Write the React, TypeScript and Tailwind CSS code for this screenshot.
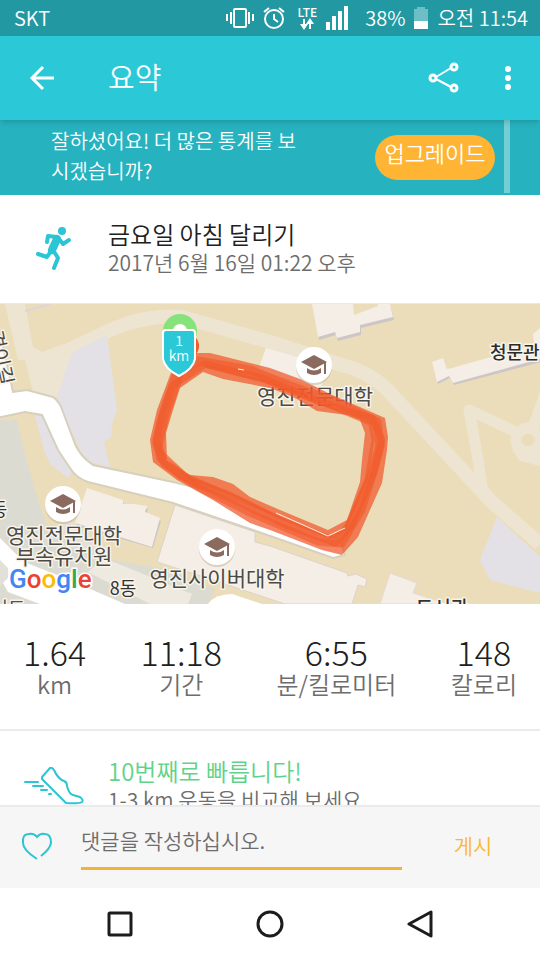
import type { ReactNode } from "react";

type PinProps = { x: number; y: number };

function SchoolPin({ x, y }: PinProps) {
  return (
    <g transform={`translate(${x} ${y})`}>
      <circle cx="0" cy="2" r="18" fill="#b9ab8c" opacity="0.45" />
      <circle r="18" fill="#ffffff" />
      <path d="M0 -10 L13 -3 L0 4 L-13 -3 Z" fill="#8b6a60" />
      <path d="M-7 3 Q0 8 7 3 V8 Q0 12 -7 8 Z" fill="#8b6a60" />
      <path d="M11 -3 V9" stroke="#8b6a60" strokeWidth="2" />
    </g>
  );
}

type LabelProps = {
  x: number;
  y: number;
  size?: number;
  color?: string;
  anchor?: "start" | "middle";
  weight?: number;
  rotate?: number;
  children: ReactNode;
};

function MapLabel({ x, y, size = 21, color = "#4b4a48", anchor = "middle", weight = 400, rotate = 0, children }: LabelProps) {
  return (
    <text
      x={x}
      y={y}
      fontSize={size}
      fontWeight={weight}
      fill={color}
      textAnchor={anchor}
      stroke="#f8f4ea"
      strokeWidth="3"
      strokeLinejoin="round"
      paintOrder="stroke"
      transform={rotate ? `rotate(${rotate} ${x} ${y})` : undefined}
    >
      {children}
    </text>
  );
}

function RouteMap() {
  return (
    <svg
      className="block h-[300px] w-full bg-[#ebddb9]"
      viewBox="0 0 540 300"
      preserveAspectRatio="xMidYMid slice"
      role="img"
      aria-label="달리기 경로 지도"
    >
      <rect width="540" height="300" fill="#ebddb9" />

      {/* footpaths */}
      <path d="M5 0 H25 L33 43 L47 50 L68 44 L105 25 L107 31 L73 48 L57 93 L33 88 L25 56 L18 56 Z" fill="#ede5d2" />
      <g fill="none" stroke="#ede5d2" strokeLinejoin="round">
        <path d="M40 56 L68 46 L115 24 Q150 10 182 13 L270 38 L345 62 Q375 70 395 94 L450 153 L493 199 L540 240" strokeWidth="14" />
        <path d="M483 188 L478 156 L469 106 L514 127" strokeWidth="11" />
        <path d="M532 126 L545 90" strokeWidth="11" />
      </g>
      <circle cx="528" cy="136" r="12" fill="none" stroke="#ede5d2" strokeWidth="11" />
      <path d="M512 146 L520 157 L540 162 V140 Z" fill="#ede5d2" />

      {/* open ground */}
      <path d="M107 31 L73 48 L67 63 L57 93 L62 108 L85 156 L110 164 L104 138 L111 133 L112 120 L117 106 Z" fill="#e4e1e6" />
      <path d="M35 112 H42 L50 129 L58 146 L72 167 L68 174 L50 160 L44 146 Z" fill="#e4e1e6" />
      <path d="M497 213 L540 253 V289 L490 276 L480 256 Z" fill="#e4e1e6" />
      <path d="M25 7 L50 0" stroke="#dcd5dc" strokeWidth="2" />
      <path d="M0 116 H17 L25 150 L35 186 L47 223 L113 256 L170 266 L215 285 L208 300 H0 Z" fill="#dcdbd2" />
      <path d="M75 219 L60 215 L66 240 L110 250 Z" fill="#e5dfd8" />

      {/* buildings */}
      <g fill="#cdc6c6" transform="translate(1 3)">
        <path d="M87 184 L123 196 L123 200 L134 200 L147 202 L145 208 L160 214 L152 241 L75 219 Z" />
        <path d="M312 0 L318 33 L335 28 L337 34 L360 28 V21 L393 13 L390 0 Z" />
        <path d="M432 58 L443 54 L447 65 L452 64 L540 39 V55 L453 78 L449 71 L437 77 Z" />
      </g>
      <g fill="#f4eee6">
        <path d="M87 184 L123 196 L123 200 L134 200 L147 202 L145 208 L160 214 L152 243 L75 219 Z" />
        <path d="M175 201 L255 228 V238 L270 242 L347 269 L348 272 L356 270 L367 275 L365 283 L358 281 L352 300 H285 L207 274 L157 258 Z" stroke="#ddd3c9" />
        <path d="M390 269 L417 279 L413 289 L448 300 H380 Z" stroke="#e4dad0" />
        <path d="M312 0 L318 33 L335 28 L337 34 L360 28 V21 L393 13 L390 0 Z" />
        <path d="M432 58 L443 54 L447 65 L452 64 L540 39 V55 L453 79 L449 72 L437 78 Z" />
        <path d="M533 30 L540 24 V40 L534 38 Z" />
        <path d="M258 66 L266 44 L300 54 L328 68 L320 84 Z" />
        <path d="M88 268 L104 254 L192 290 L188 300 H150 Z" fill="#efeae0" />
      </g>
      <path d="M353 0 L354 11 L378 2 V0 Z" fill="#ebddb9" />

      {/* streets */}
      <path
        d="M-4 12 L13 88 L27 86 L53 93 Q60 98 63 108 L75 140 Q80 152 93 161 L173 178 L215 188 L340 236 L345 251 L333 254 L253 226 L173 199 L88 178 Q76 174 70 164 L58 146 L42 111 L25 108 L-4 114 Z"
        fill="#ffffff"
        stroke="#d6d0bd"
        strokeWidth="2"
      />
      <path d="M-2 232 L24 258 L60 272 L125 300 H40 L8 288 L-2 270 Z" fill="#ffffff" />
      <path d="M208 300 Q215 290 232 290 L262 300 Z" fill="#ffffff" />
      <path d="M-2 254 L8 264 L8 274 L-2 284 Z" fill="#e2e0d8" />

      <MapLabel x={315} y={100}>영진전문대학</MapLabel>

      {/* recorded laps */}
      <circle cx="187" cy="42" r="12" fill="#f15a29" />
      <path
        fillRule="evenodd"
        fill="#f0562a"
        fillOpacity="0.72"
        d="M172 66 L157 106 L150 136 L153 158 L177 176 L213 196 L250 219 L270 226 L322 246 L342 251 L358 233 L382 179 L387 146 L388 133 L385 114 L330 90 L300 75 L270 64 L210 49 L192 49 Z
           M180 84 L203 68 L223 75 L270 84 L293 93 L317 107 L347 111 L360 116 L365 129 L362 156 L360 178 L347 216 L328 226 L280 206 L250 193 L233 180 L213 173 L190 171 L167 156 L166 129 L173 106 Z"
      />
      <g fill="none" stroke="#f25a2b" strokeLinejoin="round" strokeOpacity="0.6">
        <path d="M177 70 L164 108 L157 136 L161 154 L182 172 L240 198 L286 220 L335 238 L350 222 L372 170 L380 142 L377 118 L336 98 L290 82 L250 66 L198 57 Z" strokeWidth="9" />
        <path d="M172 82 L160 118 L156 140 L164 160 L200 184 L250 209 L318 238 L342 240 L362 206 L375 165 L382 136 L372 114 L320 98 L262 74 L205 60 Z" strokeWidth="7" />
        <path d="M182 72 L168 112 L160 146 L190 174 L232 190 L280 214 L330 233 L344 226 L366 176 L373 136 L370 120 L330 103 L270 79 L205 62" strokeWidth="3" />
      </g>
      <path d="M276 209 L328 232 L345 224 M238 65 L244 66" fill="none" stroke="#fff4ea" strokeWidth="1" />

      <SchoolPin x={314} y={61} />
      <SchoolPin x={63} y={200} />
      <SchoolPin x={217} y={243} />

      <MapLabel x={490} y={55} size={18} color="#2b2b2b" anchor="start" weight={500}>청문관</MapLabel>
      <MapLabel x={64} y={239}>영진전문대학</MapLabel>
      <MapLabel x={64} y={260}>부속유치원</MapLabel>
      <MapLabel x={217} y={282}>영진사이버대학</MapLabel>
      <MapLabel x={123} y={291} size={18} color="#333333">8동</MapLabel>
      <MapLabel x={-1} y={212} size={18} color="#333333">동</MapLabel>
      <MapLabel x={442} y={311} size={19} color="#333333" weight={500}>도서관</MapLabel>
      <MapLabel x={8} y={312} size={19} color="#55524e">서도</MapLabel>
      <MapLabel x={-12} y={28} size={20} anchor="start" rotate={78}>경이길</MapLabel>

      <text x="9" y="284" fontFamily="Roboto, sans-serif" fontSize="26" fontWeight="500" stroke="#ffffff" strokeWidth="3" paintOrder="stroke">
        <tspan fill="#4285f4">G</tspan>
        <tspan fill="#ea4335">o</tspan>
        <tspan fill="#fbbc05">o</tspan>
        <tspan fill="#4285f4">g</tspan>
        <tspan fill="#34a853">l</tspan>
        <tspan fill="#ea4335">e</tspan>
      </text>

      {/* start marker and distance shield */}
      <circle cx="180" cy="27" r="17" fill="#86e37c" />
      <circle cx="180" cy="27" r="7" fill="#ffffff" />
      <path d="M166 26 H192 Q195 26 195 29 V55 Q193 65 179 72 Q165 65 163 55 V29 Q163 26 166 26 Z" fill="#2bc9d7" stroke="#ffffff" strokeWidth="2" />
      <g fill="#ffffff" fontSize="14" textAnchor="middle">
        <text x="179" y="42">1</text>
        <text x="179" y="57">km</text>
      </g>
    </svg>
  );
}

function StatusBar() {
  return (
    <div className="flex h-9 shrink-0 items-center bg-[#2298a2] pr-3 pl-3.5 text-xl font-[350] text-white">
      <span>SKT</span>
      <div className="ml-auto flex items-center">
        <svg className="mr-2 h-6 w-7" viewBox="0 0 28 24" fill="none" stroke="#fff" strokeWidth="2">
          <rect x="8" y="3" width="12" height="18" rx="1" />
          <path d="M5 6 V18 M1 8 V15 M23 6 V18 M27 8 V15" />
        </svg>
        <svg className="mr-3 h-6 w-6" viewBox="0 0 24 24" fill="none" stroke="#fff" strokeWidth="2">
          <circle cx="12" cy="13" r="9" />
          <path d="M12 8 V13 L16 16 M2 6 L7 2 M17 2 L22 6" />
        </svg>
        <div className="mr-2 flex flex-col items-center">
          <span className="text-xs leading-3 font-medium">LTE</span>
          <svg className="h-3 w-4" viewBox="0 0 16 12" fill="#fff">
            <path d="M4 1 H6 V6 H9 L5 12 L1 6 H4 Z M10 11 H12 V6 H15 L11 0 L7 6 H10 Z" />
          </svg>
        </div>
        <svg className="mr-4 h-6 w-6" viewBox="0 0 24 24" fill="#fff">
          <path d="M1 16 H5 V24 H1 Z M7 10 H11 V24 H7 Z M13 5 H17 V24 H13 Z M19 0 H23 V24 H19 Z" />
        </svg>
        <span>38%</span>
        <svg className="mx-2 h-6 w-4" viewBox="0 0 16 24">
          <path d="M4 1 H12 V3 H15 V23 H1 V3 H4 Z" fill="#6dbfc5" />
          <path d="M1 15 H15 V23 H1 Z" fill="#fff" />
        </svg>
        <span>오전 11:54</span>
      </div>
    </div>
  );
}

const stats = [
  { value: "1.64", label: "km" },
  { value: "11:18", label: "기간" },
  { value: "6:55", label: "분/킬로미터" },
  { value: "148", label: "칼로리" },
];

export default function App() {
  return (
    <div className="flex h-screen flex-col bg-white font-['Noto_Sans_CJK_KR',sans-serif] font-[350] text-[#202020]">
      <StatusBar />

      <header className="z-10 flex h-[84px] shrink-0 items-center bg-[#2bc9d7] pr-4 pl-7 text-white shadow-md">
        <button type="button" aria-label="뒤로" className="flex h-12 w-20 items-center">
          <svg className="h-7 w-7" viewBox="0 0 28 28" fill="none" stroke="#fff" strokeWidth="3">
            <path d="M26 14 H4 M15 3 L4 14 L15 25" />
          </svg>
        </button>
        <h1 className="pb-1 text-[29px] leading-9 font-[350]">요약</h1>
        <button type="button" aria-label="공유" className="ml-auto flex h-12 w-12 items-center justify-center">
          <svg className="h-8 w-8" viewBox="0 0 32 32" fill="none" stroke="#fff" strokeWidth="3">
            <circle cx="5" cy="16" r="3" />
            <circle cx="26" cy="5" r="3" />
            <circle cx="26" cy="26" r="3" />
            <path d="M8 15 L23 6 M8 17 L23 25" strokeWidth="2" />
          </svg>
        </button>
        <button type="button" aria-label="더보기" className="ml-6 flex h-12 w-8 items-center justify-center">
          <svg className="h-7 w-2" viewBox="0 0 8 28" fill="#fff">
            <circle cx="4" cy="5" r="3" />
            <circle cx="4" cy="14" r="3" />
            <circle cx="4" cy="23" r="3" />
          </svg>
        </button>
      </header>

      <main className="min-h-0 flex-1 overflow-hidden">
        <section className="flex h-[75px] bg-[#26b2bf] pr-[30px] pl-[51px] text-white">
          <p className="w-64 pt-1.5 text-xl leading-[30px]">잘하셨어요! 더 많은 통계를 보시겠습니까?</p>
          <button type="button" className="mt-[15px] ml-auto h-[45px] w-[120px] rounded-full bg-[#ffb533] pb-3 text-[22px] leading-8 whitespace-nowrap">
            업그레이드
          </button>
          <div className="ml-[9px] h-[73px] w-1.5 bg-[#74ced5]" />
        </section>

        <section className="flex h-[109px] border-b border-[#e8e8e8]">
          <svg className="mt-7 ml-8 h-12 w-11 shrink-0" viewBox="0 0 44 48" fill="none" stroke="#2bc5d3" strokeLinecap="round" strokeLinejoin="round">
            <circle cx="30" cy="8" r="4" fill="#2bc5d3" stroke="none" />
            <path d="M15 19 L16 13 L25 14" strokeWidth="4" />
            <path d="M25 16 L20 27" strokeWidth="8" />
            <path d="M27 16 L31 21 L37 17" strokeWidth="4" />
            <path d="M19 28 L15 34 L6 31" strokeWidth="4" />
            <path d="M21 27 L26 35 L22 45" strokeWidth="4" />
          </svg>
          <div className="ml-8 pt-[23px]">
            <h2 className="text-2xl leading-8 font-[350]">금요일 아침 달리기</h2>
            <p className="text-[21px] leading-6 text-[#6d6d6d]">2017년 6월 16일 01:22 오후</p>
          </div>
        </section>

        <RouteMap />

        <section className="flex h-[127px] justify-between border-b-2 border-[#ebebeb] px-[23px] pt-7">
          {stats.map((stat) => (
            <div key={stat.label} className="flex flex-col items-center">
              <span className="text-[34px] leading-10 font-light">{stat.value}</span>
              <span className="text-2xl leading-6 text-[#6d6d6d]">{stat.label}</span>
            </div>
          ))}
        </section>

        <section className="flex pt-6">
          <svg className="mt-3 ml-6 h-10 w-[60px] shrink-0" viewBox="0 0 60 40" fill="none" stroke="#2bc5d3" strokeWidth="2" strokeLinecap="round" strokeLinejoin="round">
            <path d="M18 10 L26 1 Q28 0 30 3 Q34 12 40 14 Q43 15 43 19 Q45 27 49 28 L56 30 Q60 33 58 35 Q55 37 42 36 L18 12 Z" />
            <path d="M1 15 H14 M9 19 H19 M17 23 H23 M25 27 H27" />
          </svg>
          <div className="ml-6">
            <h3 className="text-2xl leading-8 font-[350] text-[#5fd38a]">10번째로 빠릅니다!</h3>
            <p className="text-[21px] leading-6 text-[#6d6d6d]">1-3 km 운동을 비교해 보세요</p>
          </div>
        </section>
      </main>

      <form className="flex h-[83px] shrink-0 border-t-2 border-[#ebebeb] bg-[#f6f6f6]" onSubmit={(e) => e.preventDefault()}>
        <button type="button" aria-label="좋아요" className="ml-[21px] h-full w-8 pb-1">
          <svg className="h-8 w-8" viewBox="0 0 32 32" fill="none" stroke="#2bc5d3" strokeWidth="2">
            <path d="M16 29 Q2 20 2 13 Q1 4 8 4 Q13 3 16 7 Q19 3 24 4 Q30 4 30 13 Q29 19 20 26" />
          </svg>
        </button>
        <input
          aria-label="댓글"
          placeholder="댓글을 작성하십시오."
          className="mt-2.5 ml-7 h-[53px] min-w-0 flex-1 border-b-[3px] border-[#f5b335] bg-transparent pb-1 text-[21px] outline-none placeholder:text-[#6d6d6d]"
        />
        <button type="submit" className="w-[138px] pb-1 pl-1 text-[21px] text-[#ffb533]">
          게시
        </button>
      </form>

      <nav className="flex h-[72px] shrink-0 items-center justify-center gap-[122px] bg-white">
        <button type="button" aria-label="최근 앱">
          <svg className="h-7 w-7" viewBox="0 0 28 28" fill="none" stroke="#1c1c1c" strokeWidth="3">
            <rect x="3" y="3" width="22" height="22" rx="1" />
          </svg>
        </button>
        <button type="button" aria-label="홈">
          <svg className="h-7 w-7" viewBox="0 0 28 28" fill="none" stroke="#1c1c1c" strokeWidth="3">
            <circle cx="14" cy="14" r="12" />
          </svg>
        </button>
        <button type="button" aria-label="뒤로 가기">
          <svg className="h-7 w-7" viewBox="0 0 28 28" fill="none" stroke="#1c1c1c" strokeWidth="3" strokeLinejoin="round">
            <path d="M25 2 V26 L3 14 Z" />
          </svg>
        </button>
      </nav>
    </div>
  );
}
